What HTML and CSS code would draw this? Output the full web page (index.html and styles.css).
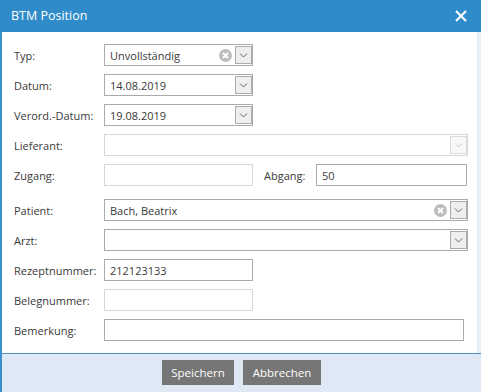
FILE: index.html
```html
<!DOCTYPE html>
<html lang="de">
<head>
<meta charset="utf-8">
<title>BTM Position</title>
<link rel="stylesheet" href="styles.css">
</head>
<body>
<div class="dialog">
  <div class="titlebar">
    <span class="title">BTM Position</span>
    <svg class="close" width="12" height="12" viewBox="0 0 12 12"><path d="M1 1L11 11M11 1L1 11" stroke="#fff" stroke-width="2.2" fill="none"/></svg>
  </div>
  <div class="body">
    <div class="row">
      <span class="label">Typ:</span>
      <div class="combo short">
        <span class="val">Unvollständig</span>
        <svg class="clear" width="13" height="13" viewBox="0 0 13 13"><circle cx="6.5" cy="6.5" r="6.5" fill="#bdbdbd"/><path d="M4 4L9 9M9 4L4 9" stroke="#fff" stroke-width="2" fill="none"/></svg>
        <span class="btn"><svg width="9" height="5" viewBox="0 0 9 5"><path d="M1 0.5L4.5 4L8 0.5" stroke="#666" fill="none"/></svg></span>
      </div>
    </div>
    <div class="row">
      <span class="label">Datum:</span>
      <div class="combo short">
        <span class="val">14.08.2019</span>
        <span class="btn"><svg width="9" height="5" viewBox="0 0 9 5"><path d="M1 0.5L4.5 4L8 0.5" stroke="#666" fill="none"/></svg></span>
      </div>
    </div>
    <div class="row">
      <span class="label">Verord.-Datum:</span>
      <div class="combo short">
        <span class="val">19.08.2019</span>
        <span class="btn"><svg width="9" height="5" viewBox="0 0 9 5"><path d="M1 0.5L4.5 4L8 0.5" stroke="#666" fill="none"/></svg></span>
      </div>
    </div>
    <div class="row">
      <span class="label">Lieferant:</span>
      <div class="combo wide disabled">
        <span class="val"></span>
        <span class="btn"><svg width="9" height="5" viewBox="0 0 9 5"><path d="M1 0.5L4.5 4L8 0.5" stroke="#ccc" fill="none"/></svg></span>
      </div>
    </div>
    <div class="row">
      <span class="label">Zugang:</span>
      <div class="input short disabled"></div>
      <span class="label2">Abgang:</span>
      <div class="input abgang">50</div>
    </div>
    <div class="row gap-before">
      <span class="label">Patient:</span>
      <div class="combo wide">
        <span class="val">Bach, Beatrix</span>
        <svg class="clear" width="13" height="13" viewBox="0 0 13 13"><circle cx="6.5" cy="6.5" r="6.5" fill="#bdbdbd"/><path d="M4 4L9 9M9 4L4 9" stroke="#fff" stroke-width="2" fill="none"/></svg>
        <span class="btn"><svg width="9" height="5" viewBox="0 0 9 5"><path d="M1 0.5L4.5 4L8 0.5" stroke="#666" fill="none"/></svg></span>
      </div>
    </div>
    <div class="row">
      <span class="label">Arzt:</span>
      <div class="combo wide">
        <span class="val"></span>
        <span class="btn"><svg width="9" height="5" viewBox="0 0 9 5"><path d="M1 0.5L4.5 4L8 0.5" stroke="#666" fill="none"/></svg></span>
      </div>
    </div>
    <div class="row">
      <span class="label">Rezeptnummer:</span>
      <div class="input short">212123133</div>
    </div>
    <div class="row">
      <span class="label">Belegnummer:</span>
      <div class="input short disabled"></div>
    </div>
    <div class="row">
      <span class="label">Bemerkung:</span>
      <div class="input remark"></div>
    </div>
  </div>
  <div class="footer">
    <span class="button save">Speichern</span>
    <span class="button cancel">Abbrechen</span>
  </div>
</div>
</body>
</html>
```
FILE: styles.css
```css
html, body {
  margin: 0;
  padding: 0;
  background: #ffffff;
}
body {
  width: 481px;
  height: 392px;
  overflow: hidden;
  font-family: "Open Sans", "Noto Sans", sans-serif;
  font-size: 11px;
  color: #3a3a3a;
}
.dialog {
  display: flex;
  flex-direction: column;
  height: 392px;
}
.titlebar {
  height: 32px;
  flex: none;
  background: #2f8bca;
  display: flex;
  align-items: center;
  justify-content: space-between;
  padding: 0 14px 0 11px;
  box-sizing: border-box;
}
.title {
  color: #fff;
  font-size: 12.5px;
  padding-bottom: 1px;
}
.close {
  display: block;
  margin-bottom: 1px;
}
.body {
  flex: 1;
  border-left: 2px solid #3a8fcc;
  border-right: 4px solid #e6f0f8;
  display: flex;
  flex-direction: column;
  gap: 8px;
  padding: 12px 0 0 12px;
}
.row {
  display: flex;
  align-items: center;
  height: 22px;
}
.row.gap-before {
  margin-top: 5px;
}
.label {
  width: 90px;
  flex: none;
}
.label2 {
  width: 52px;
  margin-left: 11px;
  flex: none;
}
.combo, .input {
  height: 22px;
  box-sizing: border-box;
  border: 1px solid #ababab;
  background: #fff;
  display: flex;
  align-items: center;
  padding-left: 5px;
  color: #3a3a3a;
}
.short { width: 149px; }
.wide { width: 364px; }
.abgang { width: 151px; }
.remark { width: 360px; }
.disabled { border-color: #d6d6d6; }
.combo .val {
  flex: 1;
}
.clear {
  display: block;
  margin-right: 3px;
}
.btn {
  width: 17px;
  height: 18px;
  box-sizing: border-box;
  border: 1px solid #acacac;
  background: #efefef;
  display: flex;
  align-items: center;
  justify-content: center;
}
.btn svg { display: block; }
.disabled .btn {
  border-color: #dcdcdc;
  background: #f7f7f7;
}
.footer {
  height: 39px;
  flex: none;
  box-sizing: border-box;
  border-top: 1px solid #4d8fc6;
  border-left: 2px solid #3a8fcc;
  background: #dee9f5;
  display: flex;
  justify-content: center;
  align-items: flex-start;
  gap: 9px;
  padding-top: 6px;
}
.button {
  height: 25px;
  background: #767676;
  color: #fff;
  font-size: 11.5px;
  display: flex;
  align-items: center;
  justify-content: center;
}
.save { width: 72px; }
.cancel { width: 78px; }
```
